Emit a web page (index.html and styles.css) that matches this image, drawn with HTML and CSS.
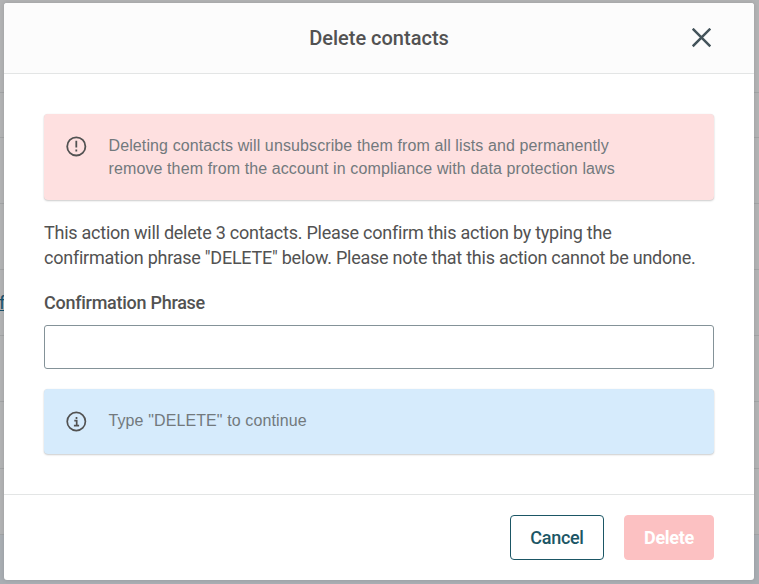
FILE: index.html
```html
<!DOCTYPE html>
<html lang="en">
<head>
<meta charset="utf-8">
<title>Delete contacts</title>
<link rel="stylesheet" href="styles.css">
</head>
<body>
<div class="backdrop">
  <div class="row row-head"></div>
  <div class="row row-short"></div>
  <div class="row"></div>
  <div class="row"></div>
  <div class="row row-link"><a>f</a></div>
  <div class="row"></div>
  <div class="row row-tall"></div>
  <div class="row"></div>
  <div class="backdrop-foot"></div>
</div>
<section class="dialog" role="dialog" aria-labelledby="title">
  <header class="dialog-header">
    <h1 id="title">Delete contacts</h1>
    <button class="close" aria-label="Close">
      <svg width="20" height="20" viewBox="0 0 20 20"><path d="M.7.7 18.3 18.3M18.3.7.7 18.3"/></svg>
    </button>
  </header>
  <div class="dialog-body">
    <div class="alert alert-danger">
      <svg class="icon" width="21" height="21" viewBox="0 0 21 21"><circle cx="10.3" cy="10.4" r="9.1"/><path d="M10.3 4.7v6.8M10.3 13.6v2"/></svg>
      <p>Deleting contacts will unsubscribe them from all lists and permanently<br>remove them from the account in compliance with data protection laws</p>
    </div>
    <p class="message">This action will delete 3 contacts. Please confirm this action by typing the<br>confirmation phrase "DELETE" below. Please note that this action cannot be undone.</p>
    <label for="phrase">Confirmation Phrase</label>
    <input id="phrase" type="text">
    <div class="alert alert-info">
      <svg class="icon icon-info" width="21" height="21" viewBox="0 0 21 21"><circle cx="10.3" cy="10.5" r="9.1"/><path d="M10.5 6.1v1.8M8.3 9.7h2.4v5M7.9 14.7h5.2"/></svg>
      <p>Type "DELETE" to continue</p>
    </div>
  </div>
  <footer class="dialog-footer">
    <button class="btn btn-cancel">Cancel</button>
    <button class="btn btn-delete">Delete</button>
  </footer>
</section>
</body>
</html>
```

FILE: styles.css
```css
* { box-sizing: border-box; }

body {
  margin: 0;
  width: 759px;
  height: 584px;
  overflow: hidden;
  position: relative;
  font-family: Roboto, "Liberation Sans", sans-serif;
  color: #525252;
  background: #b2b3b4;
}

h1, p { margin: 0; }
button { padding: 0; font-family: inherit; }

.backdrop {
  position: absolute;
  inset: 0;
  display: flex;
  flex-direction: column;
}
.row { flex: none; height: 66px; border-bottom: 1px solid #a2a4a5; }
.row-head { height: 93px; }
.row-short { height: 45px; }
.row-tall { height: 67px; }
.row-link { padding-top: 22px; }
.row-link a {
  display: block;
  width: 4px;
  height: 19px;
  border-bottom: 1px solid #17506b;
  color: #17506b;
  font-size: 18px;
  line-height: 22px;
  text-indent: -1px;
}
.backdrop-foot { flex: 1; background: #a9aeb3; }

.dialog {
  position: relative;
  display: flex;
  flex-direction: column;
  width: 750px;
  height: 577px;
  margin: 3px 0 0 4px;
  background: #fff;
  border-radius: 3px;
  overflow: hidden;
  box-shadow: 0 0 4px rgba(0, 0, 0, .12);
}

.dialog-header {
  display: grid;
  grid-template-columns: 1fr auto 1fr;
  align-items: center;
  height: 71px;
  padding-right: 42px;
  padding-left: 42px;
  background: #fcfcfc;
  border-bottom: 1px solid #e3e5e5;
}
.dialog-header h1 {
  grid-column: 2;
  font-size: 20px;
  font-weight: 500;
  line-height: 28px;
}
.close {
  justify-self: end;
  display: block;
  height: 20px;
  background: none;
  border: 0;
}
.close svg { display: block; fill: none; stroke: #44545b; stroke-width: 2.5; }

.dialog-body { flex: 1; padding: 40px 40px 0; }

.alert {
  display: flex;
  gap: 21.5px;
  margin: 0 -.4px;
  padding: 20px 22.4px;
  border-radius: 4px;
  box-shadow: 0 1px 2px rgba(0, 0, 0, .2), 0 0 1px rgba(0, 0, 0, .1);
  font-family: "Liberation Sans", sans-serif;
  font-size: 16px;
  line-height: 23px;
  letter-spacing: .11px;
  color: #72797d;
}
.alert p { white-space: nowrap; }
.alert-danger { height: 86.4px; background: #fee0e0; }
.alert-info { height: 65.4px; margin-top: 20px; background: #d6ebfc; }
.icon {
  flex: none;
  margin-top: 2px;
  fill: none;
  stroke: #525252;
  stroke-width: 1.8;
}
.icon-info { stroke-width: 1.7; }

.message {
  margin-top: 19.6px;
  font-size: 18px;
  line-height: 25px;
  letter-spacing: -.245px;
  white-space: nowrap;
}
label {
  display: block;
  margin-top: 20px;
  font-size: 18px;
  font-weight: 500;
  line-height: 25px;
  letter-spacing: -.27px;
}
input {
  display: block;
  width: 100%;
  height: 44px;
  margin-top: 10px;
  border: 1px solid #849298;
  border-radius: 3px;
  background: #fff;
}

.dialog-footer {
  display: flex;
  justify-content: flex-end;
  gap: 20px;
  height: 86px;
  padding: 20px 40px;
  border-top: 1px solid #e3e5e5;
}
.btn {
  height: 45px;
  border: 1px solid #1b5665;
  border-radius: 4px;
  font-size: 18px;
  font-weight: 500;
  letter-spacing: -.3px;
}
.btn-cancel { width: 94px; background: #fff; color: #1b5665; }
.btn-delete { width: 90px; border-color: #fcc1c2; background: #fcc1c2; color: #fff; font-weight: 700; }
```
